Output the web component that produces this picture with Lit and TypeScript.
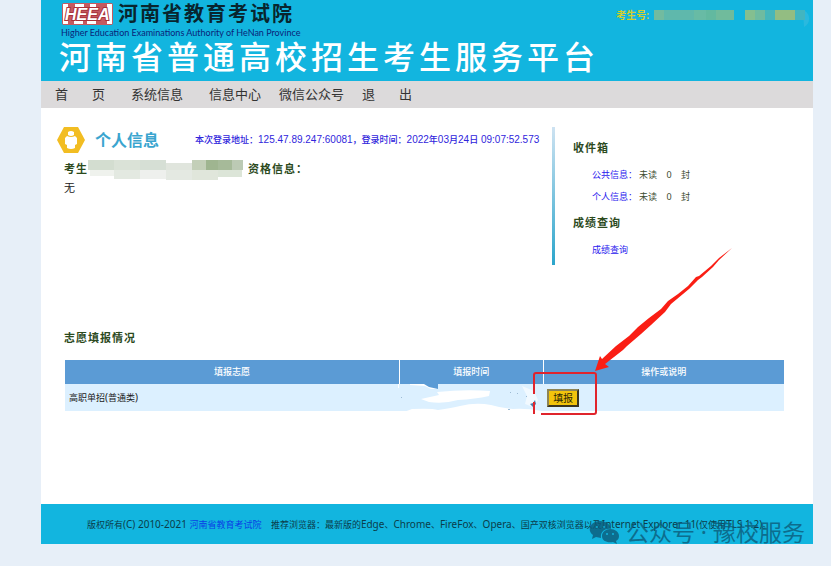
import { LitElement, html, css, svg } from "lit";
import { customElement } from "lit/decorators.js";

/** Sets runs of Latin letters and digits one step larger than the Chinese around them. */
const mixed = (text: string) =>
  text
    .split(/([\x20-\x7e]+)/)
    .filter((run) => run !== "")
    .map((run) => (/^[\x20-\x7e]/.test(run) ? html`<span class="latin">${run}</span>` : run));

const idMosaic: [number, number, string][] = [
  [0, 10, "#72bba0"], [10, 30, "#5fb8ac"], [40, 12, "#68bba5"], [52, 10, "#62b9a0"],
  [62, 18, "#70bb9c"], [91, 10, "#84bf90"], [101, 10, "#6fbba0"], [111, 10, "#45b6bb"],
  [121, 20, "#93bd82"], [141, 10, "#42b5c0"],
];

const nameMosaic: [number, number, number, number, string][] = [
  [0, 0, 26, 10, "#d3ddd0"], [26, 0, 26, 10, "#dae2d7"], [52, 0, 26, 10, "#d6dfd5"],
  [78, 3, 26, 7, "#e0e5dd"], [104, 0, 14, 10, "#c3cfb8"], [118, 0, 12, 10, "#9fb590"],
  [130, 0, 14, 10, "#a6ba99"], [144, 0, 11, 10, "#bccab4"],
  [2, 10, 24, 6, "#eff2ed"], [26, 10, 26, 9, "#e3e9e1"], [52, 10, 26, 9, "#eef0ed"],
  [78, 10, 26, 10, "#e4e9e2"], [104, 10, 26, 10, "#e0e6db"], [130, 10, 24, 7, "#dce5d8"],
];

@customElement("app-root")
export class AppRoot extends LitElement {
  static styles = css`
    :host {
      display: flex;
      flex-direction: column;
      min-height: 100vh;
      box-sizing: border-box;
      padding: 0 18px 22px 41px;
      background: #e7eff8;
      color: #222;
      font: 9px/16px "Noto Sans", "Noto Sans CJK SC", sans-serif;
    }
    .latin { font-size: 10px; white-space: pre; }
    a { color: #2a20ee; text-decoration: none; }
    svg { display: block; flex: none; }
    h1, h2, h3, p, ul { margin: 0; padding: 0; }
    ul { list-style: none; }

    header {
      display: flex;
      justify-content: space-between;
      background: #12b5df;
      padding: 1px 3px 7px 18px;
      white-space: nowrap;
    }
    .org { display: flex; align-items: center; gap: 4px; padding-left: 2px; }
    .org-name { font-size: 20px; line-height: 26px; font-weight: 700; letter-spacing: 2px; color: #08252e; }
    .org-en {
      padding-left: 2px;
      font: 400 9px/12px Lato, "Noto Sans", sans-serif;
      color: #0a2478;
    }
    h1 { font-size: 32px; line-height: 35px; font-weight: 500; letter-spacing: 4px; color: #fff; }
    .candidate { display: flex; gap: 5px; padding-top: 6px; font-size: 10px; color: #d3cf2e; font-weight: 700; }
    .candidate svg { margin-top: 3px; }

    nav { background: #dcdadb; padding: 0 14px; white-space: nowrap; }
    nav ul { display: flex; }
    nav a { color: #333; font-size: 13px; line-height: 27px; }
    nav li + li { margin-left: 26px; }
    nav li + .snug { margin-left: 18px; }
    .pair { display: flex; gap: 24px; }

    main { flex: 1; background: #fff; padding: 0 29px 24px 24px; }
    .top { display: flex; padding-top: 19px; margin-right: -29px; }
    .info { flex: 1; min-width: 0; margin-left: -8px; }
    .info-head { display: flex; align-items: center; gap: 10px; white-space: nowrap; }
    .info-head h2 { font-size: 16px; line-height: 24px; color: #3aa5cf; font-weight: 700; }
    .login { margin-left: 26px; color: #3025dc; font-weight: 500; }
    .login .latin { font-family: "Liberation Sans", sans-serif; }
    .label { font-size: 11px; line-height: 18px; font-weight: 700; letter-spacing: 1px; color: #2c4a1d; }
    .status { display: flex; align-items: flex-start; padding: 7px 0 0 7px; }
    .status svg + .label { margin-left: 4px; }
    .none { padding-left: 7px; font-size: 11px; line-height: 16px; }

    aside {
      width: 261px;
      flex: none;
      height: 138px;
      box-sizing: border-box;
      padding: 12px 0 0 18px;
      border-left: 3px solid;
      border-image: linear-gradient(#cfe3f2, #2aa5cb) 1;
      color: #3c4c30;
      white-space: nowrap;
    }
    aside h3 { letter-spacing: 2px; }
    aside ul { padding: 7px 0 6px 19px; line-height: 22px; }
    .mail { display: flex; }
    .mail b { font-weight: 400; width: 24px; text-align: center; }
    .mail span { padding-left: 2px; }

    .wish { margin: 64px 0 13px -1px; }
    table { width: 100%; table-layout: fixed; border-collapse: collapse; }
    .c1 { width: 46.5%; }
    .c2 { width: 20%; }
    th { background: #5b9bd5; color: #fff; height: 24px; padding: 0; font-weight: 500; }
    td { background: #dcf0ff; height: 27px; padding: 0 4px; position: relative; }
    th + th { border-left: 1px solid #fff; }
    .smudge { position: absolute; left: -1px; top: 0; z-index: 1; }
    .note { position: absolute; left: -13px; top: -140px; z-index: 2; pointer-events: none; }
    td button {
      display: block;
      padding: 0 4px;
      border: 2px outset #8e8555;
      background: #f2c40c;
      color: #2b2606;
      font: 10px/14px "Noto Sans CJK SC", sans-serif;
    }

    footer {
      position: relative;
      background: #12b5df;
      padding: 12px 0 11px 46px;
      color: #0b3d4a;
      white-space: nowrap;
    }
    footer a { color: #0a3fe6; margin: 0 7px 0 0; }
    .mark {
      position: absolute;
      right: 8px;
      bottom: 0;
      display: flex;
      align-items: flex-end;
      gap: 7px;
      font-size: 23px;
      line-height: 24px;
      color: #0c5c7a;
      opacity: 0.8;
    }
  `;

  private logo() {
    return html`<svg width="53" height="24" viewBox="0 0 53 24" role="img" aria-label="HEEA">
      <rect x="1" y="1" width="51" height="22" rx="2" fill="#c45a60" />
      <path d="M2 2h5v20H2zM14 2h9v4h-9zM13 18h9v4h-9zM29 2h6v4h-6zM26 18h9v4h-9zM46 2h5v20h-5z" fill="#fff" />
      <text x="4" y="18" font-family="Liberation Sans" font-size="16" font-style="italic" font-weight="700"
        fill="#fff" stroke="#a8323a" stroke-width="2" paint-order="stroke">HEEA</text>
    </svg>`;
  }

  render() {
    return html`
      <header>
        <div>
          <div class="org">${this.logo()}<span class="org-name">河南省教育考试院</span></div>
          <p class="org-en">Higher Education Examinations Authority of HeNan Province</p>
          <h1>河南省普通高校招生考生服务平台</h1>
        </div>
        <div class="candidate">
          <span>考生号:</span>
          <svg width="156" height="18" viewBox="0 0 156 18">
            <path d="M149 0c8 3 8 14 1 17z" fill="#2ab9df" />
            ${idMosaic.map(([x, w, c]) => svg`<rect x=${x} y="0" width=${w} height="10" fill=${c} />`)}
          </svg>
        </div>
      </header>
      <nav>
        <ul>
          <li><a href="#" class="pair"><span>首</span><span>页</span></a></li>
          <li><a href="#">系统信息</a></li>
          <li><a href="#">信息中心</a></li>
          <li class="snug"><a href="#">微信公众号</a></li>
          <li class="snug"><a href="#" class="pair"><span>退</span><span>出</span></a></li>
        </ul>
      </nav>
      <main>
        <section class="top">
          <div class="info">
            <div class="info-head">
              <svg width="28" height="26" viewBox="0 0 28 26">
                <path d="M7 0h14l7 13-7 13H7L0 13z" fill="#f2bd22" />
                <path d="M11 5q3-2 6 0v3q-3 2-6 0z" fill="#fff" />
                <path d="M10 9q4 2 8 0l2 2v6l-2 1v3q-4 2-8 0v-3l-2-1v-6z" fill="#fff" />
              </svg>
              <h2>个人信息</h2>
              <p class="login">${mixed("本次登录地址：125.47.89.247:60081，登录时间：2022年03月24日 09:07:52.573")}</p>
            </div>
            <div class="status">
              <span class="label">考生</span>
              <svg width="156" height="20" viewBox="0 0 156 20">
                ${nameMosaic.map(([x, y, w, h, c]) => svg`<rect x=${x} y=${y} width=${w} height=${h} fill=${c} />`)}
              </svg>
              <span class="label">资格信息：</span>
            </div>
            <p class="none">无</p>
          </div>
          <aside>
            <h3 class="label">收件箱</h3>
            <ul>
              <li class="mail"><a href="#">公共信息：</a><span>未读</span><b>0</b>封</li>
              <li class="mail"><a href="#">个人信息：</a><span>未读</span><b>0</b>封</li>
            </ul>
            <h3 class="label">成绩查询</h3>
            <ul>
              <li><a href="#">成绩查询</a></li>
            </ul>
          </aside>
        </section>
        <h3 class="label wish">志愿填报情况</h3>
        <table>
          <colgroup><col class="c1" /><col class="c2" /><col /></colgroup>
          <thead>
            <tr><th>填报志愿</th><th>填报时间</th><th>操作或说明</th></tr>
          </thead>
          <tbody>
            <tr>
              <td>${mixed("高职单招(普通类)")}</td>
              <td>
                <svg class="smudge" width="146" height="30" viewBox="0 0 146 30">
                  <path d="M0 0h1v4H0z" fill="#fff" />
                  <path d="M12 0h28v5h-7l-6-3-15-1z" fill="#fff" />
                  <path d="M26 0h14v5l-9-2z" fill="#5b9bd5" />
                  <path d="M23 15l18-4-2-3q28-3 53-1l-1 5q-14 3-31 4-14 4-29 2z" fill="#fff" />
                  <path d="M6 28l8-3q20-1 26 1 14-2 22-4 16-4 31-1 10 3 22 4 12-1 29 2v3H6z" fill="#fff" />
                  <path d="M124 2l12 5 4 9-5 7-8-3 2-8z" fill="#fff" opacity=".6" />
                  <path d="M112 8h1v1h-1zM119 9h1v1h-1zM128 12h1v1h-1zM110 25h2v1h-2zM3 13h1v1H3z" fill="#9dbbd4" />
                  <path d="M132 20l3-1 2-3 1 4-3 3z" fill="#4b7ca8" />
                </svg>
              </td>
              <td>
                <button type="button">填报</button>
                <svg class="note" width="206" height="174" viewBox="530 244 206 174">
                  <path d="M534 394v-19q0-2 2-2h58q2 0 2 2v37q0 2-2 2h-53M534 402v12" fill="none" stroke="#e0242c" stroke-width="2" />
                  <path d="M732 248L719 258L711 266L699 276L696 277L688 286L678 294L668 301L661 309L649 318L638 327L629 336L616 346L602 359L600 356L595 371L609 367L605 364L623 350L627 346L641 334L651 325L665 312L671 304L689 289L698 280L702 277L713 267L719 260Z" fill="#fa1e14" />
                </svg>
              </td>
            </tr>
          </tbody>
        </table>
      </main>
      <footer>
        ${mixed("版权所有(C) 2010-2021 ")}<a href="#">河南省教育考试院</a>
        ${mixed("推荐浏览器：最新版的Edge、Chrome、FireFox、Opera、国产双核浏览器以及Internet Explorer 11(仅使用TLS 1.2)。")}
        <div class="mark">
          <svg width="30" height="24" viewBox="0 0 30 24">
            <path d="M11 1c6 0 11 4 11 8-6-1-11 3-10 9l-5-1-4 2 1-4C-3 10 2 1 11 1z" fill="#0c5c7a" />
            <path d="M21 9c5 0 9 3 9 7 0 2-1 4-3 5l1 3-4-2c-6 1-11-1-11-6 0-4 4-7 8-7z" fill="#0c5c7a" />
            <g fill="#12b5df"><circle cx="8" cy="7" r="1" /><circle cx="15" cy="7" r="1" /><circle cx="18" cy="14" r="1" /><circle cx="24" cy="14" r="1" /></g>
          </svg>
          <span>公众号 · 豫校服务</span>
        </div>
      </footer>
    `;
  }
}
